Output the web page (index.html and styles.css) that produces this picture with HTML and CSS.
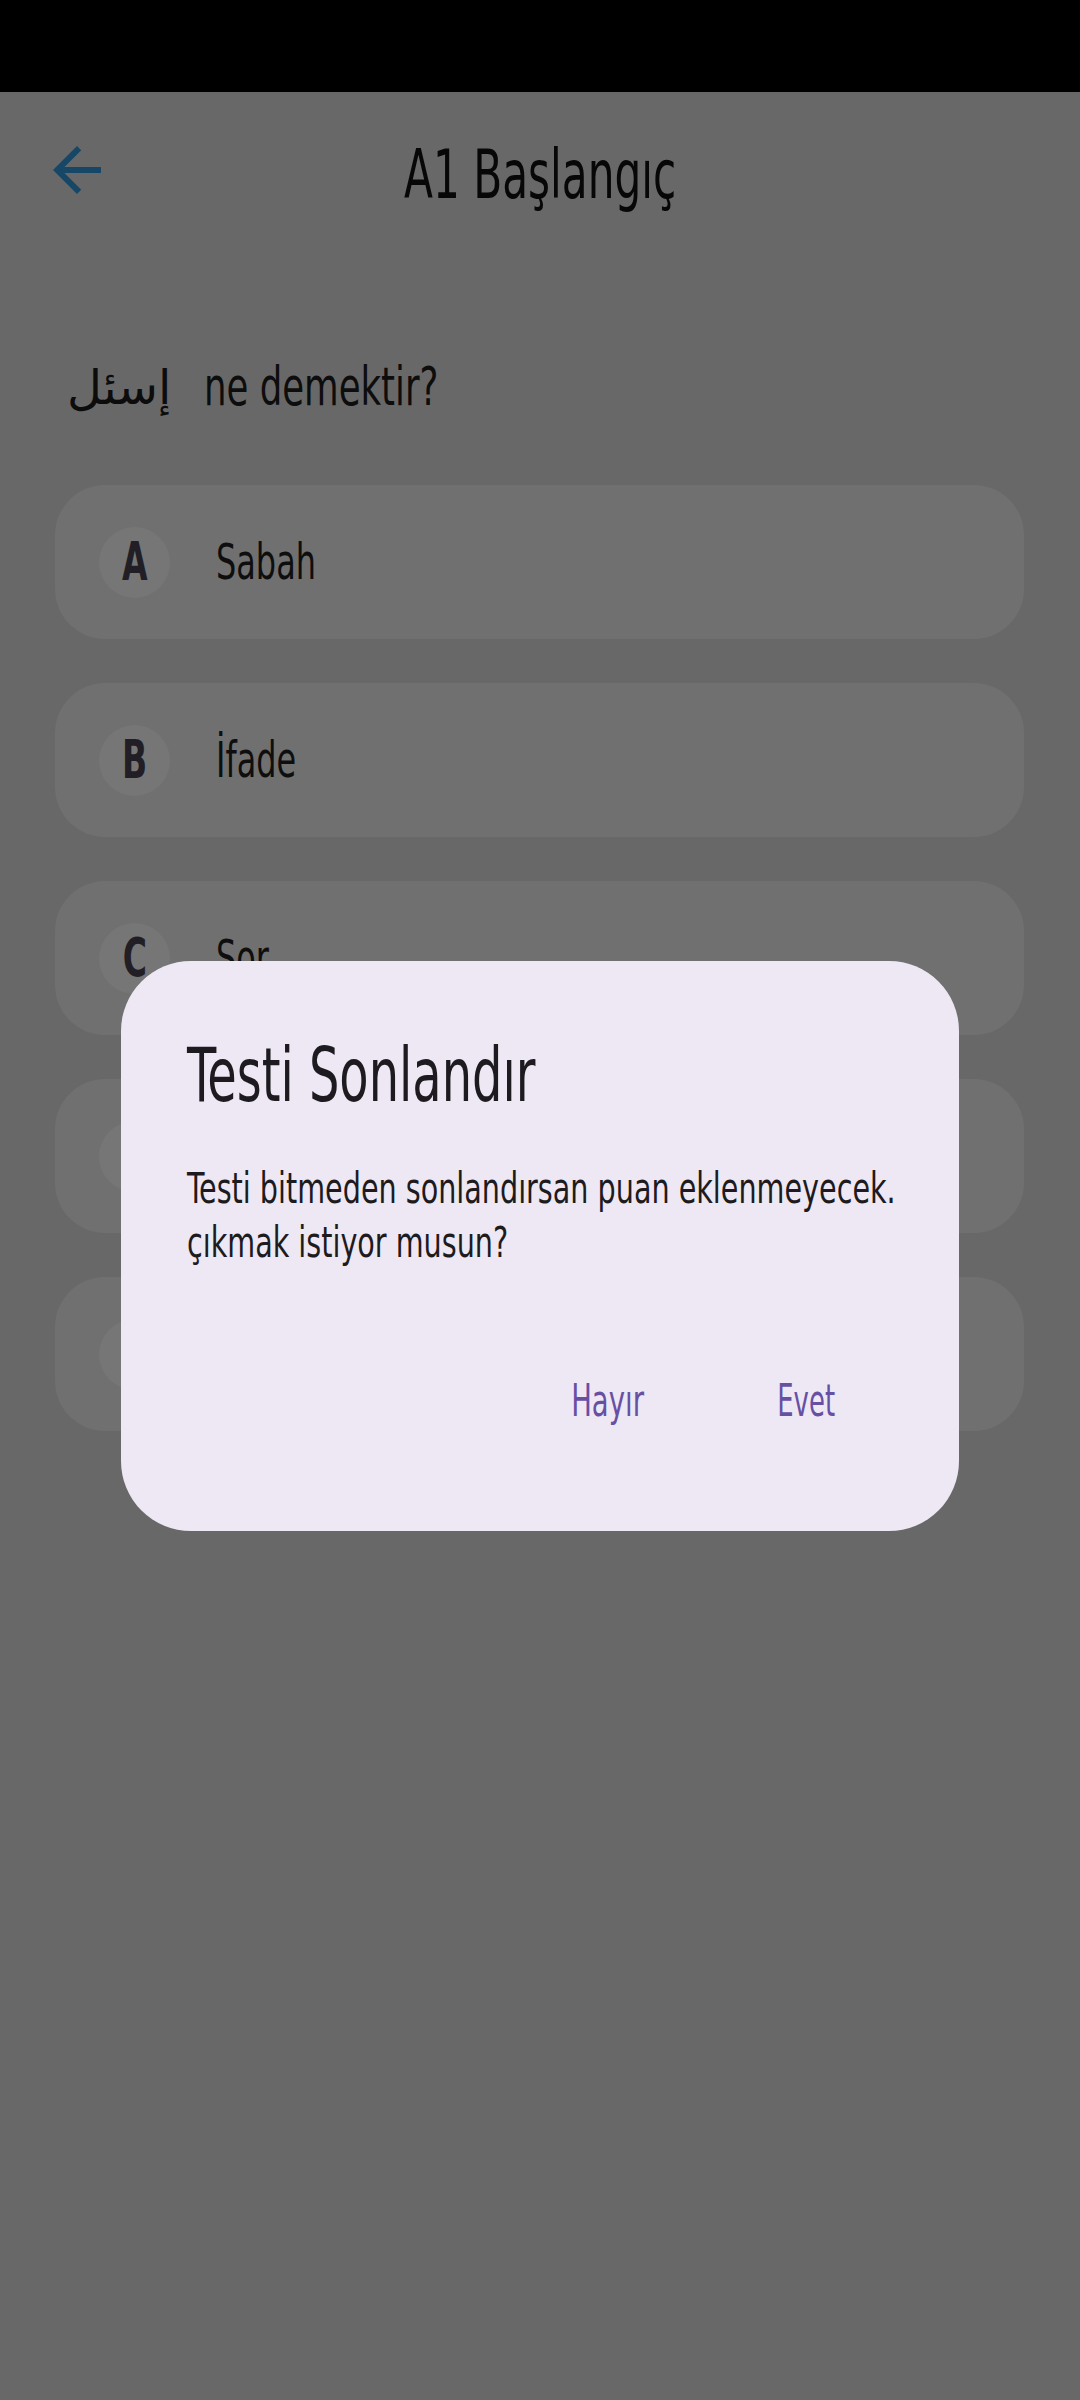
FILE: index.html
```html
<!DOCTYPE html>
<html lang="tr">
<head>
<meta charset="utf-8">
<title>A1 Başlangıç</title>
<link rel="stylesheet" href="styles.css">
</head>
<body>
<div class="screen">
  <div class="statusbar"></div>
  <header class="topbar">
    <button class="back" aria-label="Geri">
      <svg viewBox="0 0 24 24" width="72" height="72"><path d="M20 11H7.83l5.59-5.59L12 4l-8 8 8 8 1.41-1.41L7.83 13H20v-2z"/></svg>
    </button>
    <h1 class="title"><span class="sx sx-title">A1 Başlangıç</span></h1>
    <div class="spacer"></div>
  </header>

  <div class="question">
    <span class="arabic" lang="ar" dir="rtl">إسئل</span>
    <span class="sx sx-q">ne demektir?</span>
  </div>

  <ul class="options">
    <li class="option"><span class="badge"><span class="sx sx-letter">A</span></span><span class="sx sx-opt">Sabah</span></li>
    <li class="option"><span class="badge"><span class="sx sx-letter">B</span></span><span class="sx sx-opt">İfade</span></li>
    <li class="option"><span class="badge"><span class="sx sx-letter">C</span></span><span class="sx sx-opt">Sor</span></li>
    <li class="option"><span class="badge"><span class="sx sx-letter">D</span></span><span class="sx sx-opt">Gel</span></li>
    <li class="option"><span class="badge"><span class="sx sx-letter">E</span></span><span class="sx sx-opt">Git</span></li>
  </ul>

  <div class="scrim">
    <div class="dialog" role="dialog">
      <h2 class="dialog-title"><span class="sx sx-dtitle">Testi Sonlandır</span></h2>
      <p class="dialog-body"><span class="sx sx-body">Testi bitmeden sonlandırsan puan eklenmeyecek.</span><br><span class="sx sx-body">çıkmak istiyor musun?</span></p>
      <div class="actions">
        <button class="action"><span class="sx sx-hayir">Hayır</span></button>
        <button class="action"><span class="sx sx-evet">Evet</span></button>
      </div>
    </div>
  </div>
</div>
</body>
</html>
```
FILE: styles.css
```css
* { box-sizing: border-box; }

html, body {
  margin: 0;
  padding: 0;
  background: #686868;
}

body {
  font-family: "DejaVu Sans Condensed", "Liberation Sans", sans-serif;
  color: #0c0c0c;
}

.screen {
  position: relative;
  width: 1080px;
  height: 2400px;
  overflow: hidden;
  background: #686868;
}

.statusbar {
  height: 92px;
  background: #000;
}

/* condensed text helper */
.sx {
  display: inline-block;
  white-space: nowrap;
  transform-origin: left center;
}

.topbar {
  display: grid;
  grid-template-columns: 1fr auto 1fr;
  height: 156px;
}

.back {
  align-self: center;
  justify-self: start;
  margin-left: 41px;
  width: 72px;
  height: 72px;
  padding: 0;
  border: 0;
  background: none;
  display: flex;
}

.back svg { display: block; fill: #164766; }

.title {
  margin: 42px 0 0;
  align-self: start;
  font-size: 68px;
  line-height: 82px;
  font-weight: 400;
  color: #070707;
  text-align: center;
}

.sx-title { transform: scaleX(0.69); transform-origin: center center; }

.question {
  display: flex;
  align-items: center;
  gap: 33px;
  margin-top: 99px;
  padding-left: 67px;
  height: 80px;
}

.arabic {
  font-family: "DejaVu Sans", sans-serif;
  font-size: 48px;
  line-height: 80px;
  color: #0c0c0c;
}

.sx-q {
  font-size: 53px;
  line-height: 80px;
  color: #0d0d0d;
  transform: scaleX(0.745);
}

.options {
  list-style: none;
  margin: 58px 0 0;
  padding: 0 56px 0 55px;
  display: flex;
  flex-direction: column;
  gap: 44px;
}

.option {
  display: flex;
  align-items: center;
  height: 154px;
  border-radius: 50px;
  background: #707070;
  padding-left: 44px;
}

.badge {
  width: 71px;
  height: 71px;
  border-radius: 50%;
  background: #767676;
  display: flex;
  align-items: center;
  justify-content: center;
  margin-right: 46px;
  flex: none;
}

.sx-letter {
  font-size: 54px;
  line-height: 54px;
  font-weight: 700;
  color: #211e26;
  transform: scaleX(0.68);
  transform-origin: center center;
}

.sx-opt {
  font-size: 50px;
  line-height: 50px;
  color: #0e0e0e;
  transform: scaleX(0.71);
}

/* dialog */
.scrim {
  position: absolute;
  top: 92px;
  left: 0;
  right: 0;
  bottom: 0;
  display: flex;
  align-items: center;
  justify-content: center;
}

.dialog {
  width: 838px;
  background: #eee8f4;
  border-radius: 70px;
  padding: 69px 66px 80px;
  color: #1d1b20;
}

.dialog-title {
  margin: 0;
  font-size: 75px;
  line-height: 90px;
  font-weight: 400;
}

.sx-dtitle { transform: scaleX(0.71); }

.dialog-body {
  margin: 41px 0 0;
  font-size: 43px;
  line-height: 54px;
}

.sx-body { transform: scaleX(0.74); }

.actions {
  margin-top: 82px;
  display: flex;
  justify-content: flex-end;
  gap: 66px;
  padding-right: 21px;
}

.action {
  width: 132px;
  height: 100px;
  padding: 0;
  border: 0;
  background: none;
  font-family: inherit;
  font-size: 45px;
  line-height: 100px;
  color: #6750a4;
  text-align: center;
}

.sx-hayir { transform: scaleX(0.68); transform-origin: center center; }
.sx-evet { transform: scaleX(0.64); transform-origin: center center; }
```
